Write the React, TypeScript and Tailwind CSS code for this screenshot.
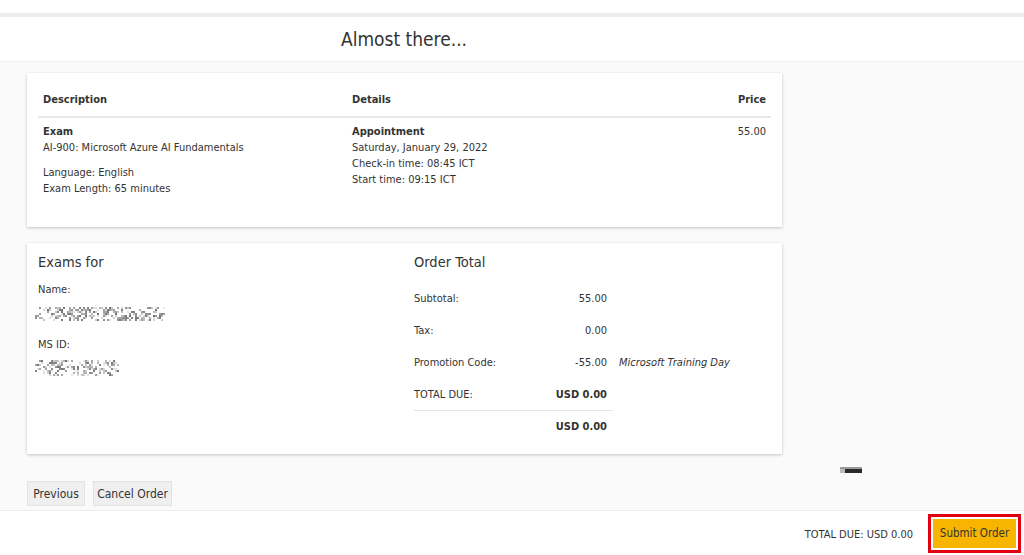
import React from "react";

function Noise({ w, h, seed }: { w: number; h: number; seed: number }) {
  const rects: React.ReactElement[] = [];
  let s = seed;
  const rnd = () => {
    s = (s * 9301 + 49297) % 233280;
    return s / 233280;
  };
  for (let y = 2; y < h - 2; y += 2) {
    for (let x = 0; x < w; x += 2) {
      const edge = Math.min(x, w - x) / 12;
      const v = rnd();
      if (v < 0.45 * Math.min(1, edge + 0.3)) {
        const g = Math.floor(80 + rnd() * 150);
        rects.push(
          <rect key={`${x}-${y}`} x={x} y={y} width={2} height={2} fill={`rgb(${g},${g},${g})`} opacity={0.8} />
        );
      }
    }
  }
  return (
    <svg width={w} height={h} className="block">
      {rects}
    </svg>
  );
}

export default function App() {
  const font = { fontFamily: '"DejaVu Sans Condensed", "DejaVu Sans", sans-serif' };
  return (
    <div className="w-[1024px] h-[555px] bg-white flex flex-col overflow-hidden text-[#333]" style={font}>
      <div className="h-[13px] bg-white" />
      <div className="h-[4px] bg-[#ededed]" />
      <header className="h-[45px] flex items-center border-b border-[#f0f0f0] bg-white">
        <div className="w-[808px] text-center text-[19px] text-[#333]">Almost there...</div>
      </header>
      <main className="flex-1 bg-[#fafafa] pl-[27px] pt-[11px] flex flex-col">
        {/* Card 1 */}
        <div className="w-[755px] h-[154px] bg-white shadow-[0_1px_3px_rgba(0,0,0,0.22)] pt-[9px] px-[11px] text-[11px] leading-[16px]">
          <div className="flex pt-[10px] pb-[8px] border-b-2 border-[#e8e8e8] font-bold">
            <div className="w-[309px] px-[5px]">Description</div>
            <div className="flex-1 px-[5px]">Details</div>
            <div className="px-[5px]">Price</div>
          </div>
          <div className="flex pt-[6px]">
            <div className="w-[309px] px-[5px]">
              <div className="font-bold">Exam</div>
              <div>AI-900: Microsoft Azure AI Fundamentals</div>
              <div className="mt-[9px]">Language: English</div>
              <div>Exam Length: 65 minutes</div>
            </div>
            <div className="flex-1 px-[5px]">
              <div className="font-bold">Appointment</div>
              <div>Saturday, January 29, 2022</div>
              <div>Check-in time: 08:45 ICT</div>
              <div>Start time: 09:15 ICT</div>
            </div>
            <div className="px-[5px]">55.00</div>
          </div>
        </div>

        {/* Card 2 */}
        <div className="mt-[16px] w-[755px] h-[211px] bg-white shadow-[0_1px_3px_rgba(0,0,0,0.22)] pt-[9px] px-[11px] flex text-[11px] leading-[16px]">
          <div className="w-[376px]">
            <div className="text-[14.5px] leading-[20px]">Exams for</div>
            <div className="mt-[10px]">Name:</div>
            <div className="-ml-[3px] mt-[7px] h-[16px] flex items-center">
              <Noise w={130} h={17} seed={7} />
            </div>
            <div className="mt-[16px]">MS ID:</div>
            <div className="-ml-[3px] mt-[7px] h-[16px] flex items-center">
              <Noise w={84} h={20} seed={31} />
            </div>
          </div>
          <div className="flex-1">
            <div className="text-[14.5px] leading-[20px]">Order Total</div>
            <div className="mt-[11px] w-[320px]">
              {[
                ["Subtotal:", "55.00", ""],
                ["Tax:", "0.00", ""],
                ["Promotion Code:", "-55.00", "Microsoft Training Day"],
              ].map(([l, v, n]) => (
                <div key={l} className="flex h-[32px] items-center">
                  <div className="w-[199px] flex justify-between pr-[6px]">
                    <span>{l}</span>
                    <span>{v}</span>
                  </div>
                  <div className="pl-[6px] italic">{n}</div>
                </div>
              ))}
              <div className="flex h-[32px] items-center w-[199px] border-b border-[#e4e4e4] justify-between pr-[6px]">
                <span>TOTAL DUE:</span>
                <span className="font-bold">USD 0.00</span>
              </div>
              <div className="flex h-[32px] items-center w-[199px] justify-end pr-[6px]">
                <span className="font-bold">USD 0.00</span>
              </div>
            </div>
          </div>
        </div>

        <div className="h-[27px] flex items-center">
          <div className="ml-[813px] mt-[4px] w-[22px] h-[6px] bg-[#2a2a2a] border-t-2 border-[#9a9a9a] flex">
            <div className="w-[5px] h-full bg-[#bbbbbb]" />
          </div>
        </div>

        <div className="flex gap-[8px] text-[12px]">
          <button className="h-[25px] w-[58px] bg-[#efefef] border border-[#e2e2e2] text-[#333]">Previous</button>
          <button className="h-[25px] w-[79px] bg-[#efefef] border border-[#e2e2e2] text-[#333]">Cancel Order</button>
        </div>
        <div className="h-[4px]" />
      </main>
      <footer className="h-[45px] border-t border-[#ececec] bg-white flex items-center justify-end pr-[3px]">
        <span className="text-[11px] mr-[15px] mt-[5px]">TOTAL DUE: USD 0.00</span>
        <div className="border-[3px] border-[#e3000f] p-[2px]">
          <button className="h-[29px] w-[83px] bg-[#f7b500] text-[11.5px] text-[#333] pt-[1px]">Submit Order</button>
        </div>
      </footer>
    </div>
  );
}
